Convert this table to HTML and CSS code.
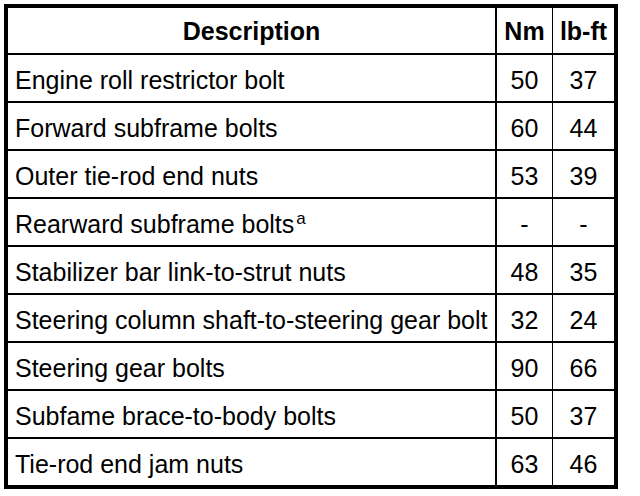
FILE: index.html
```html
<!DOCTYPE html>
<html>
<head>
<meta charset="utf-8">
<link rel="stylesheet" href="styles.css">
</head>
<body>
<table class="torque">
  <thead>
    <tr class="head-row">
      <th class="desc-head">Description</th>
      <th class="nm">Nm</th>
      <th class="lbft">lb-ft</th>
    </tr>
  </thead>
  <tbody>
    <tr><td class="desc">Engine roll restrictor bolt</td><td class="nm">50</td><td class="lbft">37</td></tr>
    <tr><td class="desc">Forward subframe bolts</td><td class="nm">60</td><td class="lbft">44</td></tr>
    <tr><td class="desc">Outer tie-rod end nuts</td><td class="nm">53</td><td class="lbft">39</td></tr>
    <tr><td class="desc">Rearward subframe bolts<sup class="note">a</sup></td><td class="nm">-</td><td class="lbft">-</td></tr>
    <tr><td class="desc">Stabilizer bar link-to-strut nuts</td><td class="nm">48</td><td class="lbft">35</td></tr>
    <tr><td class="desc">Steering column shaft-to-steering gear bolt</td><td class="nm">32</td><td class="lbft">24</td></tr>
    <tr><td class="desc">Steering gear bolts</td><td class="nm">90</td><td class="lbft">66</td></tr>
    <tr><td class="desc">Subfame brace-to-body bolts</td><td class="nm">50</td><td class="lbft">37</td></tr>
    <tr><td class="desc">Tie-rod end jam nuts</td><td class="nm">63</td><td class="lbft">46</td></tr>
  </tbody>
</table>
</body>
</html>
```

FILE: styles.css
```css
html, body {
  margin: 0;
  padding: 0;
  background: #fff;
}

body {
  font-family: "Liberation Sans", Arial, sans-serif;
  color: #000;
}

.torque {
  margin: 4px 0 0 4px;
  border-collapse: separate;
  border-spacing: 0;
  border: 4px solid #000;
  table-layout: fixed;
  width: 614px;
  font-size: 25px;
  line-height: 1;
}

.torque th,
.torque td {
  box-sizing: border-box;
  padding: 2px 7px 0;
  vertical-align: middle;
  white-space: nowrap;
}

.torque th {
  height: 45px;
  font-weight: bold;
  text-align: center;
}

.torque td {
  height: 48px;
  padding-top: 4px;
  border-top: 2px solid #000;
}

.desc-head,
.desc {
  width: 487px;
}

.desc {
  text-align: left;
}

.torque .nm {
  width: 57px;
  padding-left: 0;
  padding-right: 0;
  border-left: 2px solid #000;
  text-align: center;
}

.torque .lbft {
  width: 62px;
  padding-left: 0;
  padding-right: 0;
  border-left: 1px solid #000;
  text-align: center;
}

.note {
  font-size: 17px;
  vertical-align: 9px;
  line-height: 0;
  margin-left: 2px;
}
```
